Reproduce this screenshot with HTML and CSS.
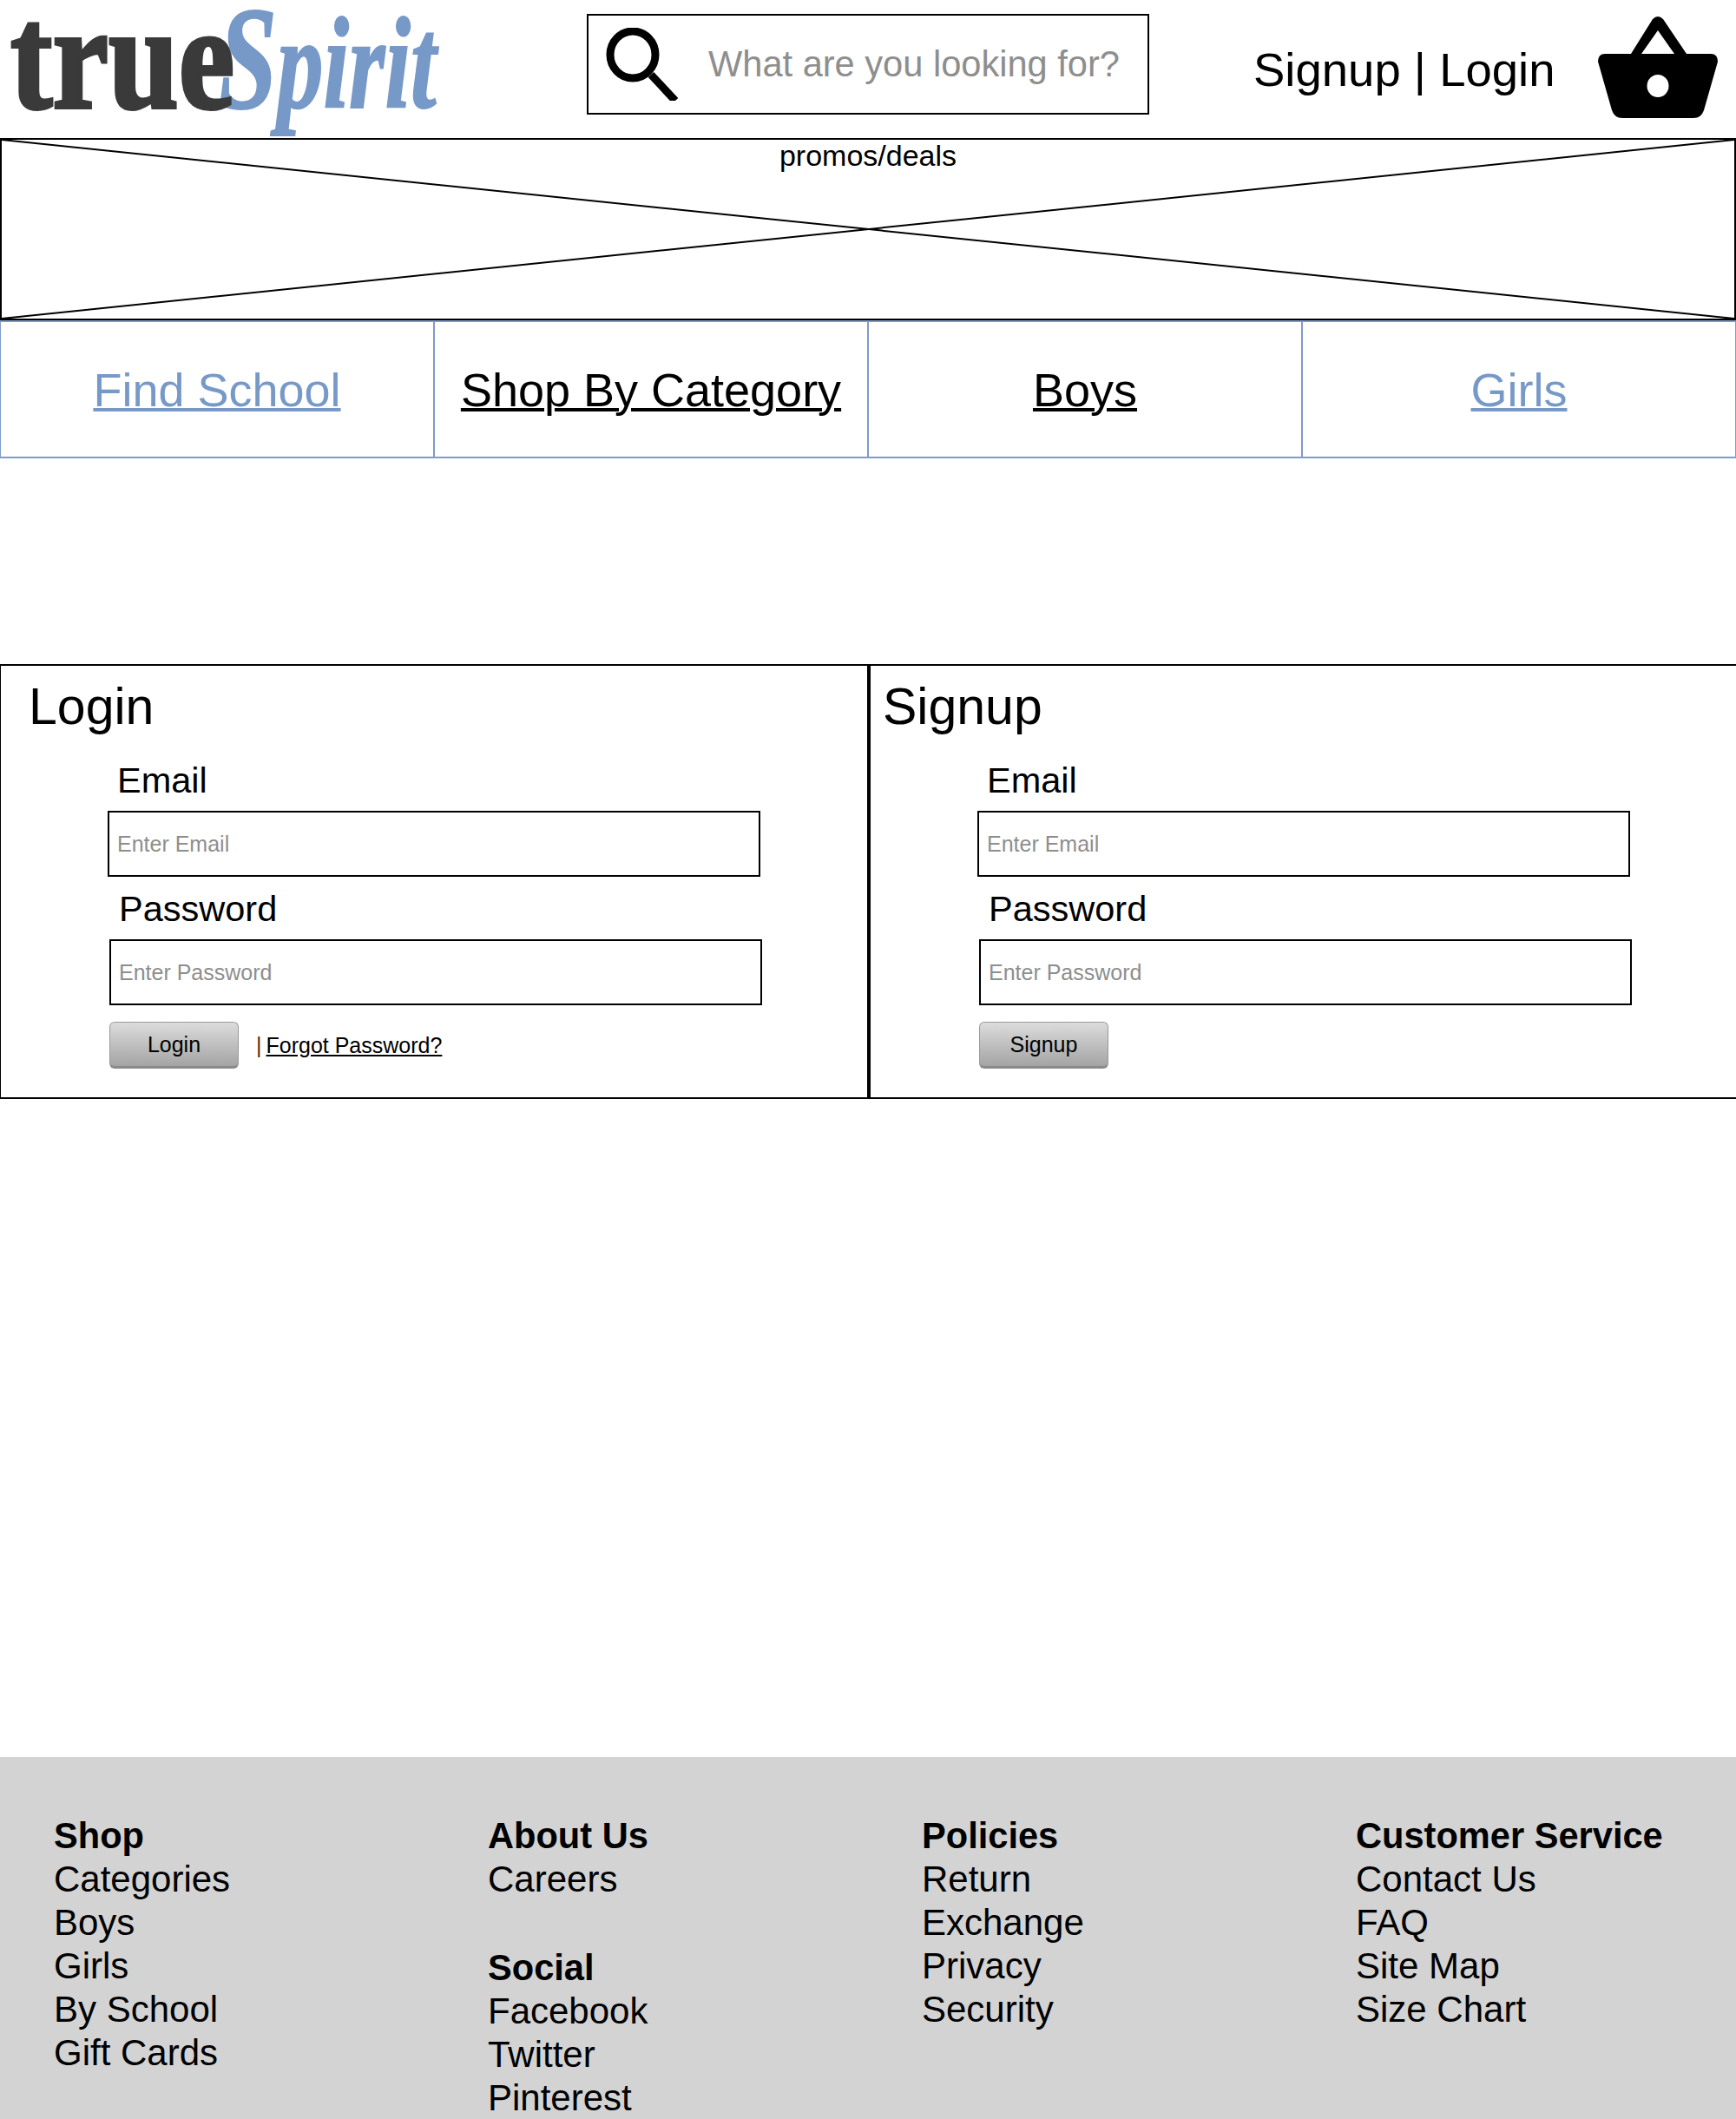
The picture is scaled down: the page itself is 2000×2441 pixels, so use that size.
FILE: index.html
```html
<!DOCTYPE html>
<html lang="en">
<head>
  <meta charset="UTF-8">
  <title>True Spirit - Login</title>
  <link rel="stylesheet" href="styles.css">
</head>
<body>
  <!-- Header -->
  <header class="header">
    <div class="logo"><span class="logo-true">true</span><span class="logo-spirit">Spirit</span></div>
    <div class="search">
      <svg class="search-icon" viewBox="0 0 84 84" width="84" height="84">
        <ellipse cx="31" cy="31" rx="26" ry="27" fill="none" stroke="#000" stroke-width="9"/>
        <path d="M52 54 L80 84" fill="none" stroke="#000" stroke-width="9"/>
      </svg>
      <span class="search-text">What are you looking for?</span>
    </div>
    <div class="account">Signup | Login</div>
    <svg class="basket" viewBox="0 0 138 118" width="138" height="118">
      <path d="M38 43 L63 3 Q69 -3 75 3 L102 43 H88 L69 16 L50 43 Z"/>
      <path fill-rule="evenodd" d="M8 43 H130 Q138 43 138 52 L122 108 Q119 117 110 117 H28 Q19 117 16 108 L0 52 Q0 43 8 43 Z M69 67 A12.5 13 0 1 0 69 93 A12.5 13 0 1 0 69 67 Z"/>
    </svg>
  </header>

  <!-- Promo placeholder -->
  <section class="promo">
    <svg class="promo-x" viewBox="0 0 2000 206" preserveAspectRatio="none">
      <line x1="0" y1="0" x2="2000" y2="206" stroke="#000" stroke-width="2"/>
      <line x1="2000" y1="0" x2="0" y2="206" stroke="#000" stroke-width="2"/>
    </svg>
    <div class="promo-text">promos/deals</div>
  </section>

  <nav class="nav">
    <a class="nav-item blue" href="#">Find School</a>
    <a class="nav-item" href="#">Shop By Category</a>
    <a class="nav-item" href="#">Boys</a>
    <a class="nav-item blue" href="#">Girls</a>
  </nav>

  <!-- Forms -->
  <main class="forms">
    <section class="panel login">
      <h2>Login</h2>
      <div class="field">
        <label>Email</label>
        <div class="input">Enter Email</div>
      </div>
      <div class="field shifted">
        <label>Password</label>
        <div class="input">Enter Password</div>
      </div>
      <div class="actions">
        <button>Login</button>
        <span class="sep">|</span>
        <a href="#">Forgot Password?</a>
      </div>
    </section>
    <section class="panel signup">
      <h2>Signup</h2>
      <div class="field">
        <label>Email</label>
        <div class="input">Enter Email</div>
      </div>
      <div class="field shifted">
        <label>Password</label>
        <div class="input">Enter Password</div>
      </div>
      <div class="actions">
        <button>Signup</button>
      </div>
    </section>
  </main>

  <!-- Footer -->
  <footer class="footer">
    <div>
      <h3>Shop</h3>
      <p>Categories</p>
      <p>Boys</p>
      <p>Girls</p>
      <p>By School</p>
      <p>Gift Cards</p>
    </div>
    <div>
      <h3>About Us</h3>
      <p>Careers</p>
      <h3 class="spaced">Social</h3>
      <p>Facebook</p>
      <p>Twitter</p>
      <p>Pinterest</p>
    </div>
    <div>
      <h3>Policies</h3>
      <p>Return</p>
      <p>Exchange</p>
      <p>Privacy</p>
      <p>Security</p>
    </div>
    <div>
      <h3>Customer Service</h3>
      <p>Contact Us</p>
      <p>FAQ</p>
      <p>Site Map</p>
      <p>Size Chart</p>
    </div>
  </footer>
</body>
</html>
```

FILE: styles.css
```css
/* General */
body {
  margin: 0;
  width: 2000px;
  height: 2441px;
  overflow: hidden;
  background: #fff;
  color: #000;
  font-family: "Liberation Sans", Arial, sans-serif;
}

/* Header */
.header {
  display: flex;
  height: 159px;
}

.logo {
  display: flex;
  align-items: baseline;
  flex: none;
  box-sizing: border-box;
  width: 676px;
  height: 159px;
  padding-left: 12px;
  white-space: nowrap;
}

.logo-true {
  z-index: 1;
  flex: none;
  margin-right: -46px;
  font-family: "Liberation Serif", serif;
  font-weight: bold;
  font-size: 171px;
  line-height: 133px;
  color: #3a3a3a;
  -webkit-text-stroke: 4px #3a3a3a;
  transform: scaleX(0.85);
  transform-origin: left;
}

.logo-spirit {
  flex: none;
  margin-left: -18px;
  font-family: "Liberation Serif", serif;
  font-style: italic;
  font-weight: bold;
  font-size: 150px;
  line-height: 100px;
  color: #7799c8;
  -webkit-text-stroke: 2px #7799c8;
  transform: scaleX(0.71);
  transform-origin: left;
}

.logo-spirit::first-letter {
  font-size: 170px;
  line-height: 100px;
}

.search {
  display: flex;
  align-items: center;
  box-sizing: border-box;
  width: 648px;
  height: 116px;
  margin-top: 16px;
  border: 2px solid #000;
  padding-left: 20px;
}

.search-icon {
  flex: none;
}

.search-text {
  margin-left: 34px;
  font-size: 41.6px;
  color: #8e8e8e;
}

.account {
  margin: 45px 0 0 120px;
  font-size: 54.5px;
  line-height: 72px;
  white-space: nowrap;
}

.basket {
  margin: 19px 0 0 49px;
  flex: none;
}

/* Promo */
.promo {
  position: relative;
  box-sizing: border-box;
  height: 210px;
  border: 2px solid #000;
}

.promo-x {
  position: absolute;
  top: 0;
  left: 0;
  width: 100%;
  height: 100%;
}

.promo-text {
  position: relative;
  text-align: center;
  font-size: 34px;
  line-height: 36px;
}

/* Nav */
.nav {
  display: grid;
  grid-template-columns: repeat(4, 1fr);
  height: 159px;
}

.nav-item {
  display: flex;
  align-items: center;
  justify-content: center;
  border: 1px solid #7d9ccd;
  border-width: 2px 1px;
  font-size: 54px;
  text-decoration-thickness: 4px;
  color: #000;
}

.nav-item.blue {
  color: #7799c8;
}

/* Forms */
.forms {
  display: grid;
  grid-template-columns: 1001px 999px;
  margin-top: 237px;
  height: 501px;
  box-sizing: border-box;
  border-top: 2px solid #000;
  border-bottom: 2px solid #000;
}

.panel {
  box-sizing: border-box;
}

.panel.login {
  padding-left: 123px;
  border-left: 1px solid #000;
  border-right: 2px solid #000;
}

.panel.signup {
  padding-left: 123px;
  border-left: 2px solid #000;
}

.panel h2 {
  margin: 17px 0 0 -91px;
  font-size: 59px;
  font-weight: normal;
  line-height: 60px;
}

.panel.signup h2 {
  margin-left: -109px;
}

.field {
  margin-top: 30px;
}

.field label {
  display: block;
  margin-left: 11px;
  font-size: 41.5px;
  line-height: 50px;
}

.field.shifted {
  margin: 12px 0 0 2px;
}

.field .input {
  box-sizing: border-box;
  width: 752px;
  height: 76px;
  margin-top: 10px;
  padding-left: 9px;
  border: 2px solid #000;
  font-size: 25px;
  line-height: 72px;
  color: #8e8e8e;
}

.actions {
  display: flex;
  align-items: center;
  margin: 19px 0 0 2px;
  font-size: 25px;
}

.actions button {
  width: 149px;
  height: 54px;
  padding: 0;
  border: 1px solid #9a9a9a;
  border-bottom: 3px solid #8a8a8a;
  border-radius: 6px;
  background: linear-gradient(#dcdcdc, #a4a4a4);
  font-family: inherit;
  font-size: 25px;
  color: #000;
}

.actions .sep {
  margin-left: 20px;
  color: #5a2c00;
}

.actions a {
  margin-left: 5px;
  color: #000;
}

/* Footer */
.footer {
  display: grid;
  grid-template-columns: repeat(4, 1fr);
  box-sizing: border-box;
  margin-top: 758px;
  height: 417px;
  padding-top: 66px;
  overflow: hidden;
  background: #d3d3d3;
  font-size: 42px;
  line-height: 50px;
}

.footer > div {
  padding-left: 62px;
}

.footer h3,
.footer p {
  margin: 0;
  font-size: 42px;
}

.footer h3 {
  font-size: 41.6px;
}

.footer h3.spaced {
  margin-top: 52px;
}
```
